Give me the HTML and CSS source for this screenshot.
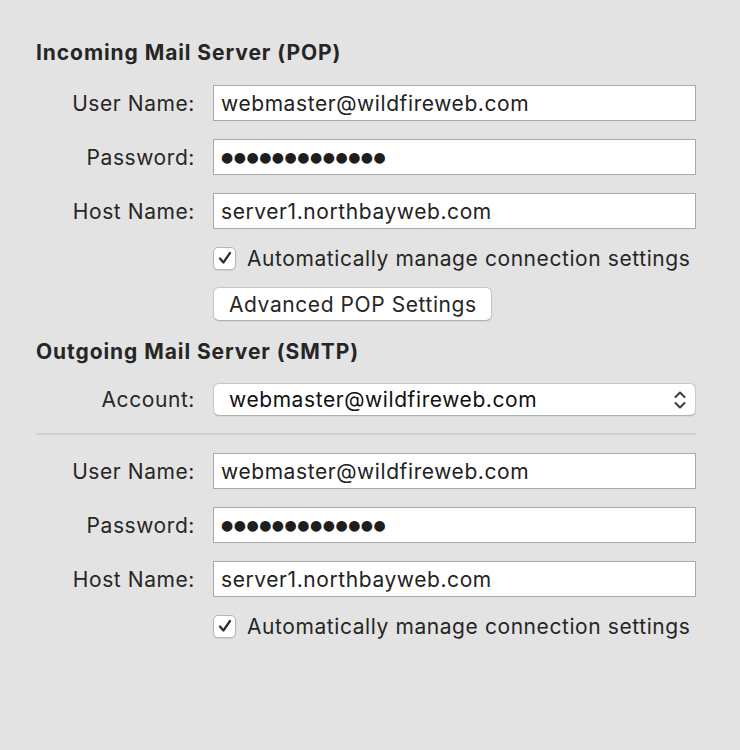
FILE: index.html
```html
<!DOCTYPE html>
<html>

<head>
	<title>Account Settings</title>
	<meta charset="UTF-8">
	<link rel="stylesheet" href="styles.css">
</head>

<body>
	<div class="panel">
		<h2 class="section-title">Incoming Mail Server (POP)</h2>
		<div class="form">
			<label class="label">User Name:</label>
			<div class="field">webmaster@wildfireweb.com</div>
			<label class="label">Password:</label>
			<div class="field"><span class="dots">●●●●●●●●●●●●●</span></div>
			<label class="label">Host Name:</label>
			<div class="field">server1.northbayweb.com</div>
			<div></div>
			<div class="check-row">
				<span class="checkbox">
					<svg width="16" height="16" viewBox="0 0 16 16"><path d="M3 8.5 L6.4 12.5 L13 3" fill="none" stroke="#2b2b2b" stroke-width="2.2" stroke-linecap="round" stroke-linejoin="round"/></svg>
				</span>
				<span>Automatically manage connection settings</span>
			</div>
			<div></div>
			<div><span class="button">Advanced POP Settings</span></div>
		</div>

		<h2 class="section-title second">Outgoing Mail Server (SMTP)</h2>
		<div class="form">
			<label class="label">Account:</label>
			<div class="select">
				<span>webmaster@wildfireweb.com</span>
				<svg width="14" height="22" viewBox="0 0 14 22"><path d="M2.5 8 L7 3.5 L11.5 8 M2.5 14 L7 18.5 L11.5 14" fill="none" stroke="#3a3a3a" stroke-width="2" stroke-linecap="round" stroke-linejoin="round"/></svg>
			</div>
		</div>
		<hr class="divider">
		<div class="form">
			<label class="label">User Name:</label>
			<div class="field">webmaster@wildfireweb.com</div>
			<label class="label">Password:</label>
			<div class="field"><span class="dots">●●●●●●●●●●●●●</span></div>
			<label class="label">Host Name:</label>
			<div class="field">server1.northbayweb.com</div>
			<div></div>
			<div class="check-row">
				<span class="checkbox">
					<svg width="16" height="16" viewBox="0 0 16 16"><path d="M3 8.5 L6.4 12.5 L13 3" fill="none" stroke="#2b2b2b" stroke-width="2.2" stroke-linecap="round" stroke-linejoin="round"/></svg>
				</span>
				<span>Automatically manage connection settings</span>
			</div>
		</div>
	</div>
</body>

</html>
```

FILE: styles.css
```css
html,
body {
	min-height: 100%;
}

body {
	margin: 0;
	background-color: #e3e3e3;
	color: #262626;
	font-family: Inter, "Liberation Sans", sans-serif;
	font-size: 21px;
	letter-spacing: 0.58px;
}

.panel {
	padding: 41px 0 100px 36px;
	width: 660px;
}

.section-title {
	margin: 0 0 20px 0;
	font-size: 21px;
	line-height: 24px;
	font-weight: 700;
	letter-spacing: 0.92px;
}

.section-title.second {
	margin-top: 19px;
	margin-bottom: 19px;
}

.form {
	display: grid;
	grid-template-columns: 159px 483px;
	column-gap: 18px;
	row-gap: 18px;
	align-items: center;
	white-space: nowrap;
}

.label {
	text-align: right;
}

.field {
	box-sizing: border-box;
	height: 36px;
	padding: 0 7px;
	display: flex;
	align-items: center;
	background-color: white;
	border: 1px solid #a9a9a9;
	color: #222;
}

.dots {
	font-family: "DejaVu Sans", sans-serif;
	font-size: 14px;
	letter-spacing: 0.5px;
	color: #1e1e1e;
}

.check-row {
	display: flex;
	align-items: center;
	gap: 11px;
	height: 22px;
}

.checkbox {
	box-sizing: border-box;
	width: 23px;
	height: 23px;
	display: flex;
	align-items: center;
	justify-content: center;
	background-color: white;
	border: 1px solid #b5b5b5;
	border-radius: 5px;
	box-shadow: 0 1px 1px rgba(0, 0, 0, 0.08);
}

.button {
	box-sizing: border-box;
	display: inline-flex;
	align-items: center;
	width: 279px;
	height: 34px;
	padding: 0 0 0 15px;
	background-color: white;
	border: 1px solid #c6c6c6;
	border-bottom-color: #b0b0b0;
	border-radius: 6px;
	box-shadow: 0 1px 1px rgba(0, 0, 0, 0.06);
}

.select {
	box-sizing: border-box;
	height: 33px;
	padding: 0 8px 0 15px;
	display: flex;
	align-items: center;
	justify-content: space-between;
	background-color: white;
	border: 1px solid #c6c6c6;
	border-bottom-color: #b0b0b0;
	border-radius: 6px;
	box-shadow: 0 1px 1px rgba(0, 0, 0, 0.06);
	color: #111;
}

.divider {
	margin: 17px 0 18px 0;
	width: 660px;
	height: 0;
	border: 0;
	border-top: 2px solid #d0d0d0;
}
```
